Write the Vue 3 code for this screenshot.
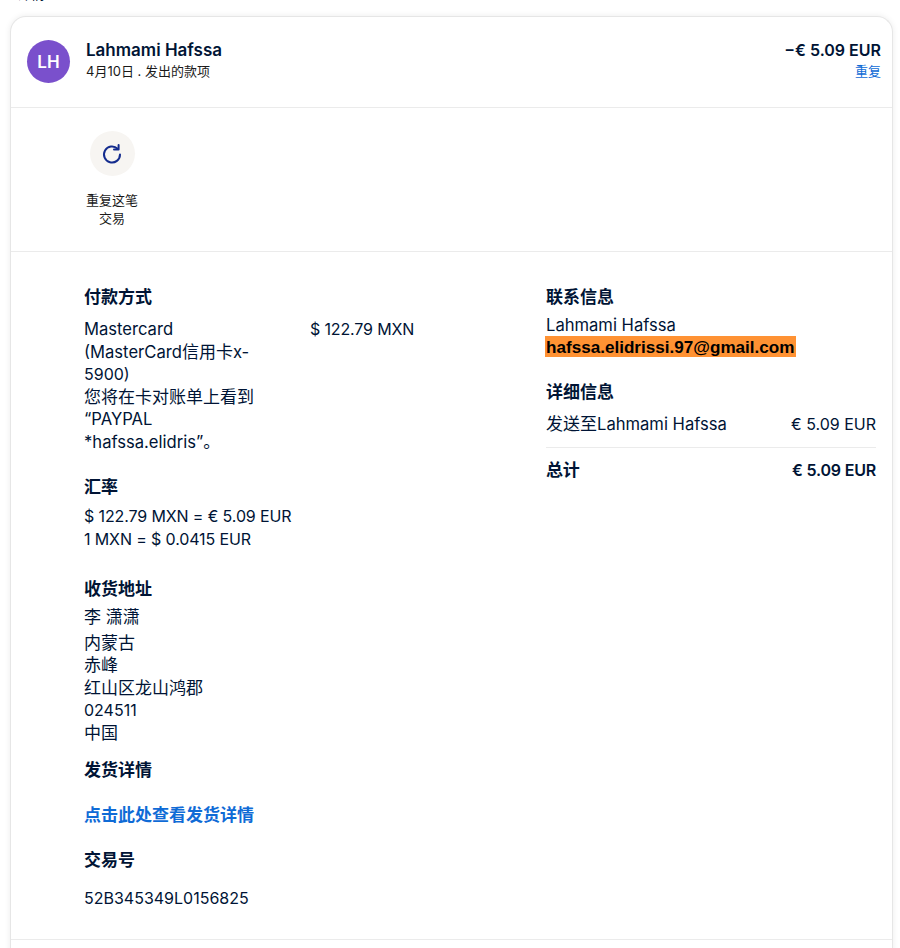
<script setup>
const addressLines = ['内蒙古', '赤峰', '红山区龙山鸿郡']
</script>

<template>
  <div class="page">
    <div class="clip"><span class="cliptext">详情</span></div>
    <section class="card">
      <header class="head">
        <div class="avatar">LH</div>
        <div class="who">
          <div class="name">Lahmami Hafssa</div>
          <div class="sub">4月10日 . 发出的款项</div>
        </div>
        <div class="sum">
          <div class="amount">−€ 5.09 EUR</div>
          <a class="again">重复</a>
        </div>
      </header>

      <div class="actions">
        <div class="action">
          <div class="circle">
            <svg width="24" height="24" viewBox="0 0 24 24" fill="none">
              <path d="M20 12.5a8 8 0 1 1-2.4-5.7" stroke="#142c8e" stroke-width="2" stroke-linecap="round"/>
              <path d="M18.6 3v4.6H14" stroke="#142c8e" stroke-width="2" stroke-linecap="round" stroke-linejoin="round"/>
            </svg>
          </div>
          <div class="action-label">重复这笔<br />交易</div>
        </div>
      </div>

      <div class="body">
        <div class="left">
          <h3 class="title t-pay">付款方式</h3>
          <div class="pay">
            <div class="pay-text">
              <div>Mastercard</div>
              <div>(MasterCard<span class="zh">信用卡</span>x-</div>
              <div class="num">5900)</div>
              <div class="zh">您将在卡对账单上看到</div>
              <div>“PAYPAL</div>
              <div>*hafssa.elidris”<span class="zh">。</span></div>
            </div>
            <div class="pay-amt num">$ 122.79 MXN</div>
          </div>

          <h3 class="title t-rate">汇率</h3>
          <div class="lines rate num">
            <div>$ 122.79 MXN = € 5.09 EUR</div>
            <div>1 MXN = $ 0.0415 EUR</div>
          </div>

          <h3 class="title t-addr">收货地址</h3>
          <div class="recipient zh">李 潇潇</div>
          <div class="lines">
            <div v-for="l in addressLines" :key="l" class="zh">{{ l }}</div>
            <div class="num">024511</div>
            <div class="zh">中国</div>
          </div>

          <h3 class="title t-ship">发货详情</h3>
          <a class="link">点击此处查看发货详情</a>

          <h3 class="title t-id">交易号</h3>
          <div class="txid num">52B345349L0156825</div>
        </div>

        <div class="right">
          <h3 class="title t-pay">联系信息</h3>
          <div class="contact">Lahmami Hafssa</div>
          <div class="email"><mark>hafssa.elidrissi.97@gmail.com</mark></div>

          <h3 class="title t-detail">详细信息</h3>
          <div class="row detail-row">
            <span><span class="zh">发送至</span>Lahmami Hafssa</span>
            <span class="num">€ 5.09 EUR</span>
          </div>
          <div class="row total">
            <span class="zh">总计</span>
            <span class="num">€ 5.09 EUR</span>
          </div>
        </div>
      </div>
      <div class="foot"></div>
    </section>
  </div>
</template>

<style>
html, body { margin: 0; background: #fff; }
</style>

<style scoped>
.page {
  height: 948px;
  overflow: hidden;
  font-family: Inter, "Noto Sans CJK SC", sans-serif;
  color: #001435;
  font-size: 16.6px;
  line-height: 22.5px;
}
.zh { font-size: 17px; }
.num { font-size: 16px; }
.clip { height: 16px; padding-left: 17px; overflow: hidden; }
.cliptext { display: block; margin-top: -16px; font-size: 14px; line-height: 20px; }
.card {
  margin: 0 7px 0 10px;
  border: 1px solid #e6e6e6;
  border-bottom: 0;
  border-radius: 16px 16px 0 0;
  box-shadow: 0 0 6px rgba(0, 0, 0, 0.08);
  background: #fff;
}
.head {
  display: flex;
  align-items: flex-start;
  height: 90px;
  padding-right: 11px;
  border-bottom: 1px solid #ebebeb;
}
.avatar {
  width: 43px;
  height: 43px;
  margin: 23px 0 0 16px;
  border-radius: 50%;
  background: #7a50cc;
  color: #fff;
  font-size: 17px;
  font-weight: 600;
  line-height: 44px;
  text-align: center;
}
.who { margin: 22px 0 0 16px; flex: 1; }
.name { font-size: 17px; font-weight: 600; line-height: 23px; }
.sub { font-size: 13px; line-height: 19px; color: #1a1a1a; }
.sum { margin-top: 22px; text-align: right; }
.amount { font-size: 16px; font-weight: 600; line-height: 23px; }
.again { display: block; font-size: 13px; line-height: 19px; color: #0f6bd6; }
.actions {
  height: 144px;
  box-sizing: border-box;
  padding: 23px 0 0 65px;
  border-bottom: 1px solid #ebebeb;
}
.action { width: 72px; text-align: center; }
.circle {
  display: flex;
  align-items: center;
  justify-content: center;
  width: 45px;
  height: 45px;
  margin: 0 auto;
  border-radius: 50%;
  background: #f7f5f2;
}
.action-label { margin-top: 15px; font-size: 13px; line-height: 18px; color: #1a1a1a; }
.body { display: flex; height: 687px; border-bottom: 1px solid #ebebeb; }
.left { width: 535px; box-sizing: border-box; padding-left: 73px; }
.right { width: 330px; }
.title { margin: 0; font-size: 17px; font-weight: 600; line-height: 22px; }
.t-pay { margin-top: 34px; }
.pay { display: flex; margin-top: 10px; }
.pay-text { width: 226px; }
.pay-amt { letter-spacing: -0.15px; }
.t-rate { margin-top: 23px; }
.rate { margin-top: 7px; letter-spacing: -0.12px; }
.t-addr { margin-top: 28px; }
.recipient { margin-top: 6px; margin-bottom: 3px; }
.t-ship { margin-top: 15px; }
.link { display: block; margin-top: 23px; color: #0f6bd6; font-size: 17px; font-weight: 600; }
.t-id { margin-top: 22px; }
.txid { margin-top: 16px; }
.contact { margin-top: 6px; }
.email { font-family: "Liberation Sans", sans-serif; font-weight: 700; font-size: 17.1px; color: #000; }
.email mark { background: #ff9233; color: inherit; padding: 2px 1px 0; margin-left: -1px; }
.t-detail { margin-top: 22px; }
.row { display: flex; justify-content: space-between; }
.detail-row { margin-top: 10px; padding-bottom: 11px; border-bottom: 1px solid #ebebeb; }
.total { margin-top: 11px; font-weight: 600; letter-spacing: -0.2px; }
.foot { height: 20px; }
</style>
